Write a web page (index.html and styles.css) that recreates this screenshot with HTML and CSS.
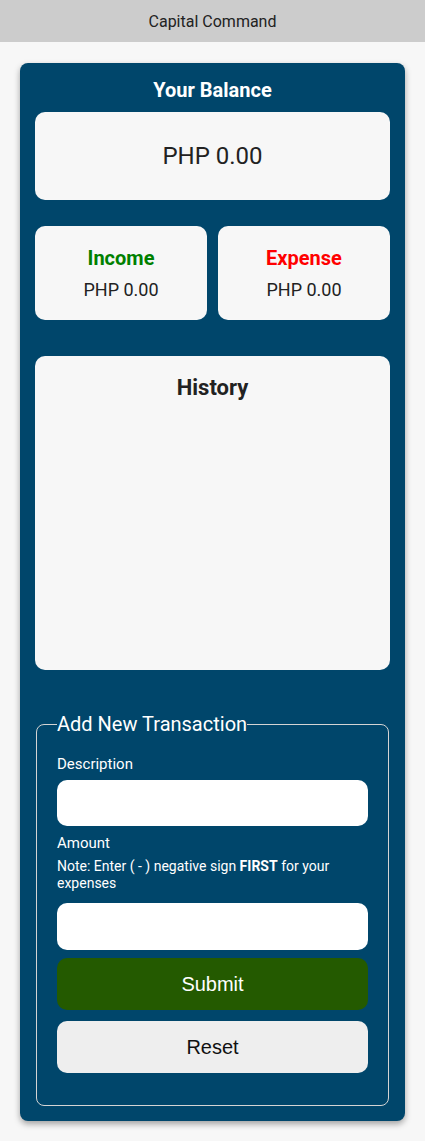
FILE: index.html
```html
<!DOCTYPE html>
<html>
<head>
<meta charset="utf-8">
<link rel="stylesheet" href="styles.css">
</head>
<body>
<header class="topbar">Capital Command</header>
<main class="app">
  <h2 class="title">Your Balance</h2>
  <div class="card balance">PHP 0.00</div>
  <div class="stats">
    <div class="card stat">
      <div class="stat-label income">Income</div>
      <div class="stat-value">PHP 0.00</div>
    </div>
    <div class="card stat">
      <div class="stat-label expense">Expense</div>
      <div class="stat-value">PHP 0.00</div>
    </div>
  </div>
  <div class="card history">
    <h3 class="history-title">History</h3>
  </div>
  <fieldset class="form">
    <legend>Add New Transaction</legend>
    <label class="lbl lbl-first">Description</label>
    <input class="field" type="text">
    <label class="lbl">Amount</label>
    <p class="note">Note: Enter ( - ) negative sign <b>FIRST</b> for your expenses</p>
    <input class="field field-amount" type="text">
    <button class="btn submit">Submit</button>
    <button class="btn reset">Reset</button>
  </fieldset>
</main>
</body>
</html>
```
FILE: styles.css
```css
* { box-sizing: border-box; }
html, body { margin: 0; padding: 0; }
body {
  background: #f7f7f7;
  font-family: Roboto, "Noto Sans", sans-serif;
  color: #222;
  width: 425px;
}
.topbar {
  height: 42px;
  background: #cccccc;
  color: #222;
  font-size: 16px;
  display: flex;
  align-items: center;
  justify-content: center;
}
.app {
  margin: 21px 20px 20px;
  background: #00466b;
  border-radius: 8px;
  padding: 15px 15px 15px;
  box-shadow: 0 3px 6px rgba(0,0,0,0.35);
}
.title {
  margin: 0 0 10px;
  color: #fff;
  font-size: 20px;
  line-height: 24px;
  font-weight: 700;
  text-align: center;
}
.card {
  background: #f7f7f7;
  border-radius: 10px;
}
.balance {
  height: 88px;
  display: flex;
  align-items: center;
  justify-content: center;
  font-size: 24px;
  color: #222;
}
.stats {
  margin-top: 26px;
  display: flex;
  gap: 11px;
}
.stat {
  flex: 1;
  height: 94px;
  display: flex;
  flex-direction: column;
  align-items: center;
  padding-top: 20px;
}
.stat-label {
  font-size: 20px;
  font-weight: 700;
  line-height: 24px;
}
.income { color: #008000; }
.expense { color: #ff0000; }
.stat-value {
  margin-top: 8px;
  font-size: 18px;
  line-height: 24px;
  color: #222;
}
.history {
  margin-top: 36px;
  height: 314px;
  padding-top: 19px;
}
.history-title {
  margin: 0;
  text-align: center;
  font-size: 22px;
  line-height: 26px;
  font-weight: 700;
  color: #222;
}
.form {
  margin: 42px 1px 0;
  border: 1px solid #d4d4d4;
  border-radius: 8px;
  padding: 19px 20px 32px;
  display: flex;
  flex-direction: column;
  color: #fff;
}
.form legend {
  font-size: 20px;
  line-height: 24px;
  padding: 0;
  margin-left: 0;
  color: #fff;
}
.lbl {
  font-size: 15px;
  line-height: 18px;
  margin-top: 8px;
}
.lbl-first { margin-top: 0; }
.field {
  margin-top: 7px;
  height: 46px;
  border: none;
  border-radius: 10px;
  background: #fff;
  outline: none;
}
.field-amount { height: 47px; margin-top: 11px; }
.note {
  margin: 6px 0 0;
  font-size: 14px;
  line-height: 17px;
}
.note b { font-weight: 700; }
.btn {
  height: 52px;
  border: none;
  border-radius: 10px;
  font-family: "Liberation Sans", Arial, sans-serif;
  font-size: 20px;
}
.submit {
  margin-top: 8px;
  background: #245a00;
  color: #fff;
}
.reset {
  margin-top: 11px;
  background: #eeeeee;
  color: #111;
}
```
